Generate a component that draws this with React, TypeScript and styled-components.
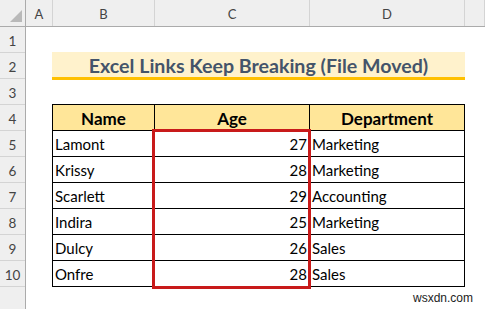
import { Fragment } from "react";
import styled, { createGlobalStyle } from "styled-components";

const GlobalStyle = createGlobalStyle`
    body {
        margin: 0;
        background: #ffffff;
        overflow: hidden;
    }
`;

const Sheet = styled.div`
    position: relative;
    width: 485px;
    height: 309px;
    overflow: hidden;
    font-family: Lato, "Noto Sans", sans-serif;
    color: #000;
`;

const ColumnBar = styled.div`
    display: flex;
    height: 27px;
    box-sizing: border-box;
    background: #efefef;
    border-bottom: 1px solid #ababab;
`;

const Corner = styled.div`
    width: 26px;
    box-sizing: border-box;
    border-right: 1px solid #ababab;
    display: flex;
    align-items: flex-end;
    justify-content: flex-end;
    padding: 0 3px 4px 0;
`;

const ColHead = styled.div<{ w?: number }>`
    ${(p) => (p.w ? `width: ${p.w}px;` : "flex: 1;")}
    flex-shrink: 0;
    box-sizing: border-box;
    border-right: 1px solid #d4d4d4;
    display: flex;
    align-items: center;
    justify-content: center;
    font-size: 13px;
    color: #444;
    padding-top: 1px;
`;

const Body = styled.div`
    display: flex;
`;

const RowBar = styled.div`
    width: 26px;
    height: 282px;
    box-sizing: border-box;
    background: #efefef;
    border-right: 1px solid #ababab;
    display: flex;
    flex-direction: column;
    flex-shrink: 0;
`;

const RowHead = styled.div`
    height: 26px;
    box-sizing: border-box;
    border-bottom: 1px solid #d4d4d4;
    display: flex;
    align-items: center;
    justify-content: center;
    font-size: 13.5px;
    color: #444;
    padding-top: 2px;
`;

const Canvas = styled.div`
    padding: 25px 0 0 26px;
`;

const Title = styled.div`
    width: 413px;
    height: 28px;
    box-sizing: border-box;
    background: #fff2cc;
    border-bottom: 3px solid #ffc000;
    display: flex;
    align-items: center;
    justify-content: center;
    font-size: 19.6px;
    font-weight: 700;
    color: #44546a;
    padding-top: 1px;
`;

const TableWrap = styled.div`
    position: relative;
    margin-top: 24px;
    width: 413px;
`;

const Grid = styled.div`
    display: grid;
    grid-template-columns: 102px 155px 155px;
    border-left: 1px solid #000;
    border-top: 1px solid #000;
`;

const Cell = styled.div<{ head?: boolean; align?: "left" | "right" | "center" }>`
    height: 26px;
    box-sizing: border-box;
    border-right: 1px solid #000;
    border-bottom: 1px solid #000;
    background: ${(p) => (p.head ? "#ffe699" : "#ffffff")};
    font-size: ${(p) => (p.head ? "17px" : "15px")};
    font-weight: ${(p) => (p.head ? 700 : 400)};
    text-align: ${(p) => p.align || "left"};
    line-height: 25px;
    padding: 1px 2px 0 2px;
    white-space: nowrap;
`;

const Highlight = styled.div`
    position: absolute;
    left: 100px;
    top: 25px;
    width: 159px;
    height: 160px;
    box-sizing: border-box;
    border: 3px solid #c81a1a;
    pointer-events: none;
`;

const Watermark = styled.div`
    position: absolute;
    right: 12px;
    bottom: 4px;
    font-family: "Liberation Sans", Arial, sans-serif;
    font-size: 12px;
    color: #222;
`;

const rows = [
    { name: "Lamont", age: 27, dept: "Marketing" },
    { name: "Krissy", age: 28, dept: "Marketing" },
    { name: "Scarlett", age: 29, dept: "Accounting" },
    { name: "Indira", age: 25, dept: "Marketing" },
    { name: "Dulcy", age: 26, dept: "Sales" },
    { name: "Onfre", age: 28, dept: "Sales" },
];

function App() {
    return (
        <>
            <GlobalStyle />
            <Sheet>
                <ColumnBar>
                    <Corner>
                        <svg width="12" height="12" viewBox="0 0 12 12">
                            <polygon points="12,0 12,12 0,12" fill="#b9b9b9" />
                        </svg>
                    </Corner>
                    <ColHead w={27}>A</ColHead>
                    <ColHead w={102}>B</ColHead>
                    <ColHead w={155}>C</ColHead>
                    <ColHead w={155}>D</ColHead>
                    <ColHead />
                </ColumnBar>
                <Body>
                    <RowBar>
                        {[1, 2, 3, 4, 5, 6, 7, 8, 9, 10].map((n) => (
                            <RowHead key={n}>{n}</RowHead>
                        ))}
                    </RowBar>
                    <Canvas>
                        <Title>Excel Links Keep Breaking (File Moved)</Title>
                        <TableWrap>
                            <Grid>
                                <Cell head align="center">Name</Cell>
                                <Cell head align="center">Age</Cell>
                                <Cell head align="center">Department</Cell>
                                {rows.map((r) => (
                                    <Fragment key={r.name}>
                                        <Cell>{r.name}</Cell>
                                        <Cell align="right">{r.age}</Cell>
                                        <Cell>{r.dept}</Cell>
                                    </Fragment>
                                ))}
                            </Grid>
                            <Highlight />
                        </TableWrap>
                    </Canvas>
                </Body>
                <Watermark>wsxdn.com</Watermark>
            </Sheet>
        </>
    );
}

export default App;
